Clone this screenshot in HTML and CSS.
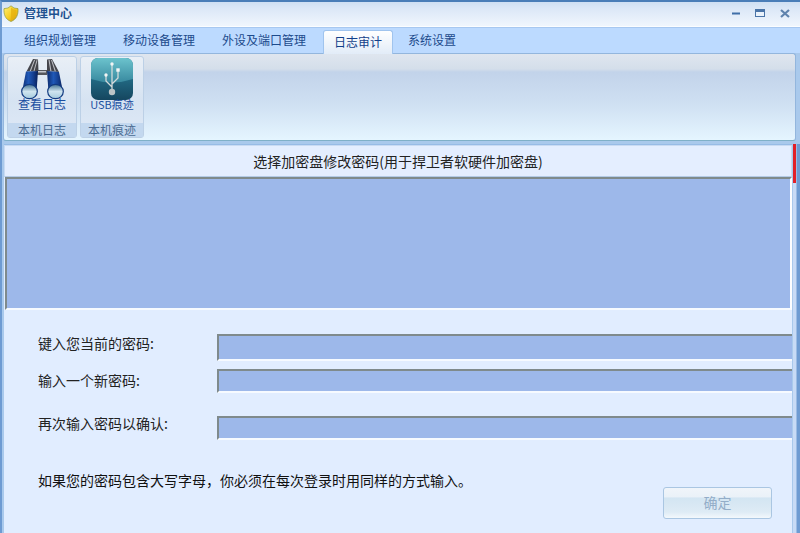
FILE: index.html
```html
<!DOCTYPE html>
<html lang="zh-CN">
<head>
<meta charset="utf-8">
<title>管理中心</title>
<link rel="stylesheet" href="styles.css">
</head>
<body>
<div class="window">
  <header class="titlebar">
    <svg class="shield" width="16" height="17" viewBox="0 0 16 17">
      <defs>
        <linearGradient id="sh" x1="0" y1="0" x2="1" y2="1"><stop offset="0" stop-color="#fff27a"/><stop offset=".55" stop-color="#f5cb20"/><stop offset="1" stop-color="#c98f10"/></linearGradient>
      </defs>
      <path d="M8 .8 11 3l4 .6c.3 5.500-.9 10.500-7 12.900C1.900 14.100.7 9.100 1 3.600L5 3z" fill="url(#sh)" stroke="#8f9a3a" stroke-width=".7"/>
      <path d="M8 2.500V15c4.300-2.100 5.500-6 5.400-10L10.500 4.300z" fill="#e6b010" opacity=".75"/>
    </svg>
    <span class="app-title">管理中心</span>
    <div class="controls">
      <svg width="8" height="3" viewBox="0 0 8 3"><rect width="8" height="2" y=".5" fill="#3f6fa8"/></svg>
      <svg width="10" height="9" viewBox="0 0 10 9"><rect x=".5" y=".5" width="9" height="7" fill="#eaf2fb" stroke="#4a74a8"/><rect width="10" height="3" fill="#4a74a8"/></svg>
      <svg width="10" height="9" viewBox="0 0 10 9"><path d="M1 1l8 7M9 1L1 8" stroke="#5f83ad" stroke-width="2.200"/></svg>
    </div>
  </header>

  <nav class="tabs">
    <span class="tab">组织规划管理</span>
    <span class="tab">移动设备管理</span>
    <span class="tab">外设及端口管理</span>
    <span class="tab active">日志审计</span>
    <span class="tab">系统设置</span>
  </nav>

  <section class="ribbon">
    <div class="group group-log">
      <div class="tool">
        <svg class="tool-icon" width="46" height="42" viewBox="0 0 46 42">
          <defs>
            <linearGradient id="barrel" x1="0" y1="0" x2="1" y2="0"><stop offset="0" stop-color="#0c2a6c"/><stop offset=".4" stop-color="#2059b8"/><stop offset=".7" stop-color="#153f90"/><stop offset="1" stop-color="#081f58"/></linearGradient>
            <linearGradient id="lens" x1="0" y1="0" x2="0" y2="1"><stop offset="0" stop-color="#3f6f90"/><stop offset=".5" stop-color="#cfe4ef"/><stop offset="1" stop-color="#a5cbdd"/></linearGradient>
          </defs>
          <path d="M18 12h10v5H18z" fill="#55575d"/>
          <path d="M19 13h8v1.500h-8z" fill="#c4c7cd"/>
          <path d="M14 1l5 .5 .5 11.500-12 .5z" fill="#44454b"/>
          <path d="M15 2l1.100 .1-4.200 11-1.300 .1zM17.500 2.200l1 .1-3 10.700-1 .1z" fill="#babcc2"/>
          <path d="M28 1.500l5-.5 7 13-12-1z" fill="#44454b"/>
          <path d="M29.500 2l1.100-.1 1.900 11.300-1.200-.1zM32 2l1-.1 4 11.500-1.300-.1z" fill="#babcc2"/>
          <path d="M7 13.500l12-.5-1.500 21H3z" fill="url(#barrel)"/>
          <path d="M28 13l12 1 4 20H29.500z" fill="url(#barrel)"/>
          <ellipse cx="10.500" cy="33.500" rx="7.800" ry="7.200" fill="url(#lens)" stroke="#123a80" stroke-width="1.200"/>
          <ellipse cx="36.500" cy="33.500" rx="7.800" ry="7.200" fill="url(#lens)" stroke="#123a80" stroke-width="1.200"/>
        </svg>
        <span class="tool-label">查看日志</span>
      </div>
      <div class="group-name">本机日志</div>
    </div>
    <div class="group group-usb">
      <div class="tool">
        <svg class="tool-icon" width="42" height="42" viewBox="0 0 42 42">
          <defs>
            <linearGradient id="usb-base" x1="0" y1="0" x2="0" y2="1"><stop offset=".4" stop-color="#24708a"/><stop offset="1" stop-color="#15465f"/></linearGradient>
            <linearGradient id="usb-top" x1="0" y1="0" x2="0" y2="1"><stop offset="0" stop-color="#6cc3cd"/><stop offset="1" stop-color="#38899f"/></linearGradient>
          </defs>
          <rect width="42" height="42" rx="7" fill="url(#usb-base)"/>
          <path d="M0 7a7 7 0 0 1 7-7h28a7 7 0 0 1 7 7v14Q21 28 0 21z" fill="url(#usb-top)"/>
          <path d="M21 34V7M21 29l-6-6v-6M21 26l6-6v-8" fill="none" stroke="#d2dadb" stroke-width="1.300"/>
          <circle cx="21" cy="34" r="3.200" fill="#bcc4c6"/>
          <circle cx="21" cy="6" r="1.700" fill="#f2f5f5"/>
          <circle cx="15" cy="17" r="1.700" fill="#f2f5f5"/>
          <rect x="25.300" y="10.300" width="3.400" height="3.400" fill="#f2f5f5"/>
        </svg>
        <span class="tool-label">USB痕迹</span>
      </div>
      <div class="group-name">本机痕迹</div>
    </div>
  </section>

  <main class="content-wrap">
    <div class="content">
      <h1 class="panel-title">选择加密盘修改密码(用于捍卫者软硬件加密盘)</h1>
      <div class="disk-list"></div>
      <form class="pw-form">
        <div class="row row-current"><label class="field-label">键入您当前的密码:</label><div class="field"></div></div>
        <div class="row row-new"><label class="field-label">输入一个新密码:</label><div class="field"></div></div>
        <div class="row row-confirm"><label class="field-label">再次输入密码以确认:</label><div class="field"></div></div>
        <p class="note">如果您的密码包含大写字母，你必须在每次登录时用同样的方式输入。</p>
        <div class="actions"><button type="button" class="ok" disabled>确定</button></div>
      </form>
    </div>
    <div class="scroll"><div class="scroll-thumb"></div></div>
  </main>
</div>
</body>
</html>
```

FILE: styles.css
```css
* { box-sizing: border-box; }
html, body { margin: 0; padding: 0; }
body {
  width: 800px;
  height: 533px;
  overflow: hidden;
  font: 12px/16px "Noto Sans CJK SC", "Liberation Sans", sans-serif;
  color: #222;
}
.window {
  width: 800px;
  height: 533px;
  display: flex;
  flex-direction: column;
  background: #a9c9ec;
  border-top: 2px solid #4a7db8;
  border-left: 2px solid #6e9bd2;
  overflow: hidden;
}
.titlebar {
  height: 25px;
  flex: none;
  display: flex;
  align-items: center;
  margin-left: -1px;
  padding: 0 0 2px 2px;
  background: linear-gradient(#cfdff3 0, #dbe7f7 6px, #f0f6fd 100%);
  border-bottom: 1px solid #fbfdff;
}
.shield { flex: none; }
.app-title {
  margin-left: 5px;
  font-weight: 700;
  color: #1f5290;
  text-shadow: 0 0 2px #fff;
}
.controls {
  margin-left: auto;
  margin-right: 10px;
  width: 58px;
  display: flex;
  justify-content: space-between;
  align-items: center;
}
.tabs {
  height: 26px;
  flex: none;
  display: flex;
  align-items: flex-end;
  gap: 5px;
  padding-left: 11px;
  background: #bcdaff;
  border-top: 1px solid #a8c8f0;
}
.tab {
  height: 24px;
  padding: 3px 11px 0;
  color: #1c4a8c;
  text-align: center;
}
.tab.active {
  position: relative;
  top: 1px;
  left: 1px;
  padding: 3px 10px 0;
  background: linear-gradient(#ffffff, #e2ecf8);
  border: 1px solid #a0c4ee;
  border-bottom: 0;
  border-radius: 3px 3px 0 0;
  color: #13408a;
}
.ribbon {
  height: 88px;
  flex: none;
  display: flex;
  gap: 3px;
  padding: 2px 0 2px 3px;
  margin: 0 4px 0 1px;
  background: linear-gradient(#dfe6ef 0, #d4deea 15px, #c2d3ea 18px, #cfe0f2 50px, #e5f5ff 100%);
  border: 1px solid #93b6dd;
  border-bottom-color: #7fb0c8;
  border-radius: 3px;
}
.group {
  width: 70px;
  display: flex;
  flex-direction: column;
  background: linear-gradient(#e9eff6, #d6e3f2 55%, #dfe9f6);
  border: 1px solid #bcd0e6;
  border-radius: 3px;
}
.group-usb { width: 64px; }
.tool {
  flex: 1;
  display: flex;
  flex-direction: column;
  align-items: center;
  padding-top: 1px;
}
.tool-icon { display: block; flex: none; }
.tool-label {
  margin-top: -4px;
  color: #1a4ea0;
  position: relative;
}
.group-usb .tool-label { font-size: 11px; }
.group-name {
  height: 14px;
  line-height: 14px;
  text-align: center;
  color: #4a6b92;
  background: #c3d8ef;
}
.content-wrap {
  flex: 1;
  min-height: 0;
  display: flex;
  padding: 3px 0 0 2px;
  background: #a9c9ec;
}
.content {
  width: 788px;
  background: #e1edff;
  border-top: 1px solid #97bce6;
}
.panel-title {
  height: 32px;
  margin: 0;
  font-size: 14px;
  font-weight: 400;
  line-height: 30px;
  text-align: center;
  color: #222;
  border: 1px solid #c9dbf3;
  border-bottom-color: #b4cbe6;
  background: #e4eeff;
}
.disk-list {
  height: 133px;
  margin-left: 1px;
  background: #9db8ea;
  border: 2px solid;
  border-color: #7f8a8c #fdfeff #f6faff #7f8a8c;
}
.pw-form { padding: 24px 0 0 34px; }
.row {
  display: flex;
  align-items: flex-start;
}
.row-new { margin-top: 8px; }
.row-confirm { margin-top: 23px; }
.field-label {
  width: 179px;
  flex: none;
  font-size: 14px;
}
.row-current .field-label { margin-top: 1px; }
.row-new .field-label { margin-top: 3px; }
.row-confirm .field-label { margin-top: -1px; }
.field {
  width: 575px;
  background: #9db8ea;
  border-style: solid;
  border-width: 2px 0 2px 2px;
  border-color: #7f8a8c transparent #f6faff #7f8a8c;
}
.row-current .field { height: 27px; }
.row-new .field { height: 24px; }
.row-confirm .field { height: 24px; }
.note { margin: 32px 0 0; color: #111; font-size: 14px; }
.actions { padding-left: 625px; }
.ok {
  display: block;
  width: 109px;
  height: 32px;
  margin-top: -1px;
  padding: 0 0 2px;
  font: inherit;
  font-size: 14px;
  color: #93adc8;
  background: linear-gradient(#f0f5fa 0, #eaf1f8 30%, #d3e5f2 33%, #deebf5 80%, #f3f8fc 100%);
  border: 1px solid #aac6e2;
  border-radius: 3px;
}
.scroll {
  width: 8px;
  flex: none;
  margin-left: 1px;
  background: linear-gradient(90deg, #c8dbf6 0, #c8dbf6 3px, #6e9bd2 4px);
}
.scroll-thumb {
  width: 3px;
  height: 39px;
  background: #e32028;
}
```
